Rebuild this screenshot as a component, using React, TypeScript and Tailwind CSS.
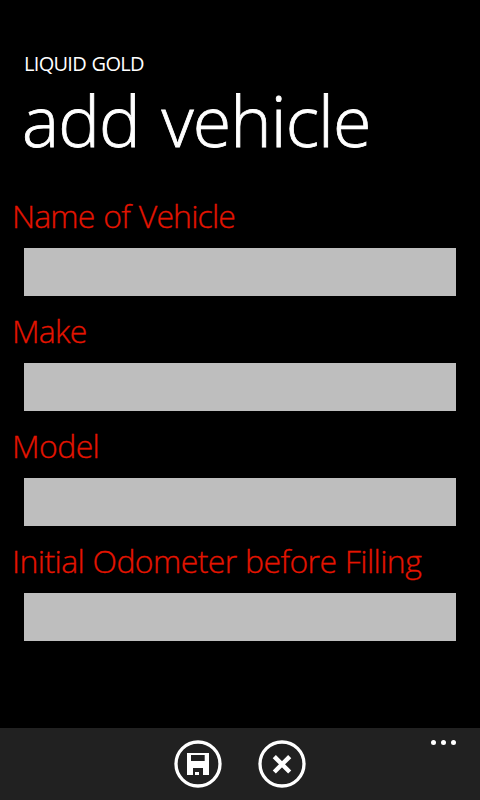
const fields = [
  { label: 'Name of Vehicle', track: 'tracking-[-0.84px] [word-spacing:1.3px]' },
  { label: 'Make', track: 'tracking-[-0.8px]' },
  { label: 'Model', track: 'tracking-[-0.6px]' },
  { label: 'Initial Odometer before Filling', track: 'tracking-[-0.6px] [word-spacing:0.7px]' },
];

function SaveIcon() {
  return (
    <svg width="48" height="48" viewBox="0 0 48 48" className="block">
      <circle cx="24" cy="24" r="22" fill="none" stroke="#fff" strokeWidth="3.3" />
      <path
        fill="#fff"
        fillRule="evenodd"
        d="M13 13h22v22h-6v-7h-10v7h-6zM17 15v6h13.7v-6z"
      />
      <rect x="21" y="32" width="4" height="3" fill="#fff" />
    </svg>
  );
}

function CancelIcon() {
  return (
    <svg width="48" height="48" viewBox="0 0 48 48" className="block">
      <circle cx="24" cy="24" r="22" fill="none" stroke="#fff" strokeWidth="3.3" />
      <path d="M16.3 16.6l15.4 15.4M31.7 16.6l-15.4 15.4" stroke="#fff" strokeWidth="4.4" />
    </svg>
  );
}

export default function App() {
  return (
    <div className="flex h-[800px] w-[480px] flex-col overflow-hidden bg-black font-['Open_Sans','Noto_Sans',sans-serif]">
      <header className="pt-[50px] pl-[22px] text-white">
        <p className="h-7 pl-0.5 text-[20px] leading-7 tracking-[-0.7px] whitespace-nowrap [word-spacing:1px]">LIQUID GOLD</p>
        <h1 className="h-[84px] text-[70px] leading-[84px] font-light tracking-[-0.9px] whitespace-nowrap [word-spacing:4.5px] [-webkit-text-stroke:0.8px_#fff]">add vehicle</h1>
      </header>
      <form className="mt-8 flex flex-1 flex-col gap-[13px]">
        {fields.map((f) => (
          <label key={f.label} className="flex flex-col gap-[10px]">
            <span className={`h-11 pl-3 text-[32px] leading-[44px] font-light whitespace-nowrap text-[#e51400] [-webkit-text-stroke:0.3px_#e51400] ${f.track}`}>
              {f.label}
            </span>
            <input className="mx-6 h-12 bg-[#bebebe] outline-none" />
          </label>
        ))}
      </form>
      <footer className="grid h-[72px] grid-cols-[1fr_auto_1fr] bg-[#212121] pt-3">
        <span />
        <div className="flex gap-9">
          <button type="button" aria-label="save" className="h-12"><SaveIcon /></button>
          <button type="button" aria-label="cancel" className="h-12"><CancelIcon /></button>
        </div>
        <div className="flex justify-end gap-[5px] pr-6">
          <i className="size-[5px] rounded-full bg-white" />
          <i className="size-[5px] rounded-full bg-white" />
          <i className="size-[5px] rounded-full bg-white" />
        </div>
      </footer>
    </div>
  );
}
